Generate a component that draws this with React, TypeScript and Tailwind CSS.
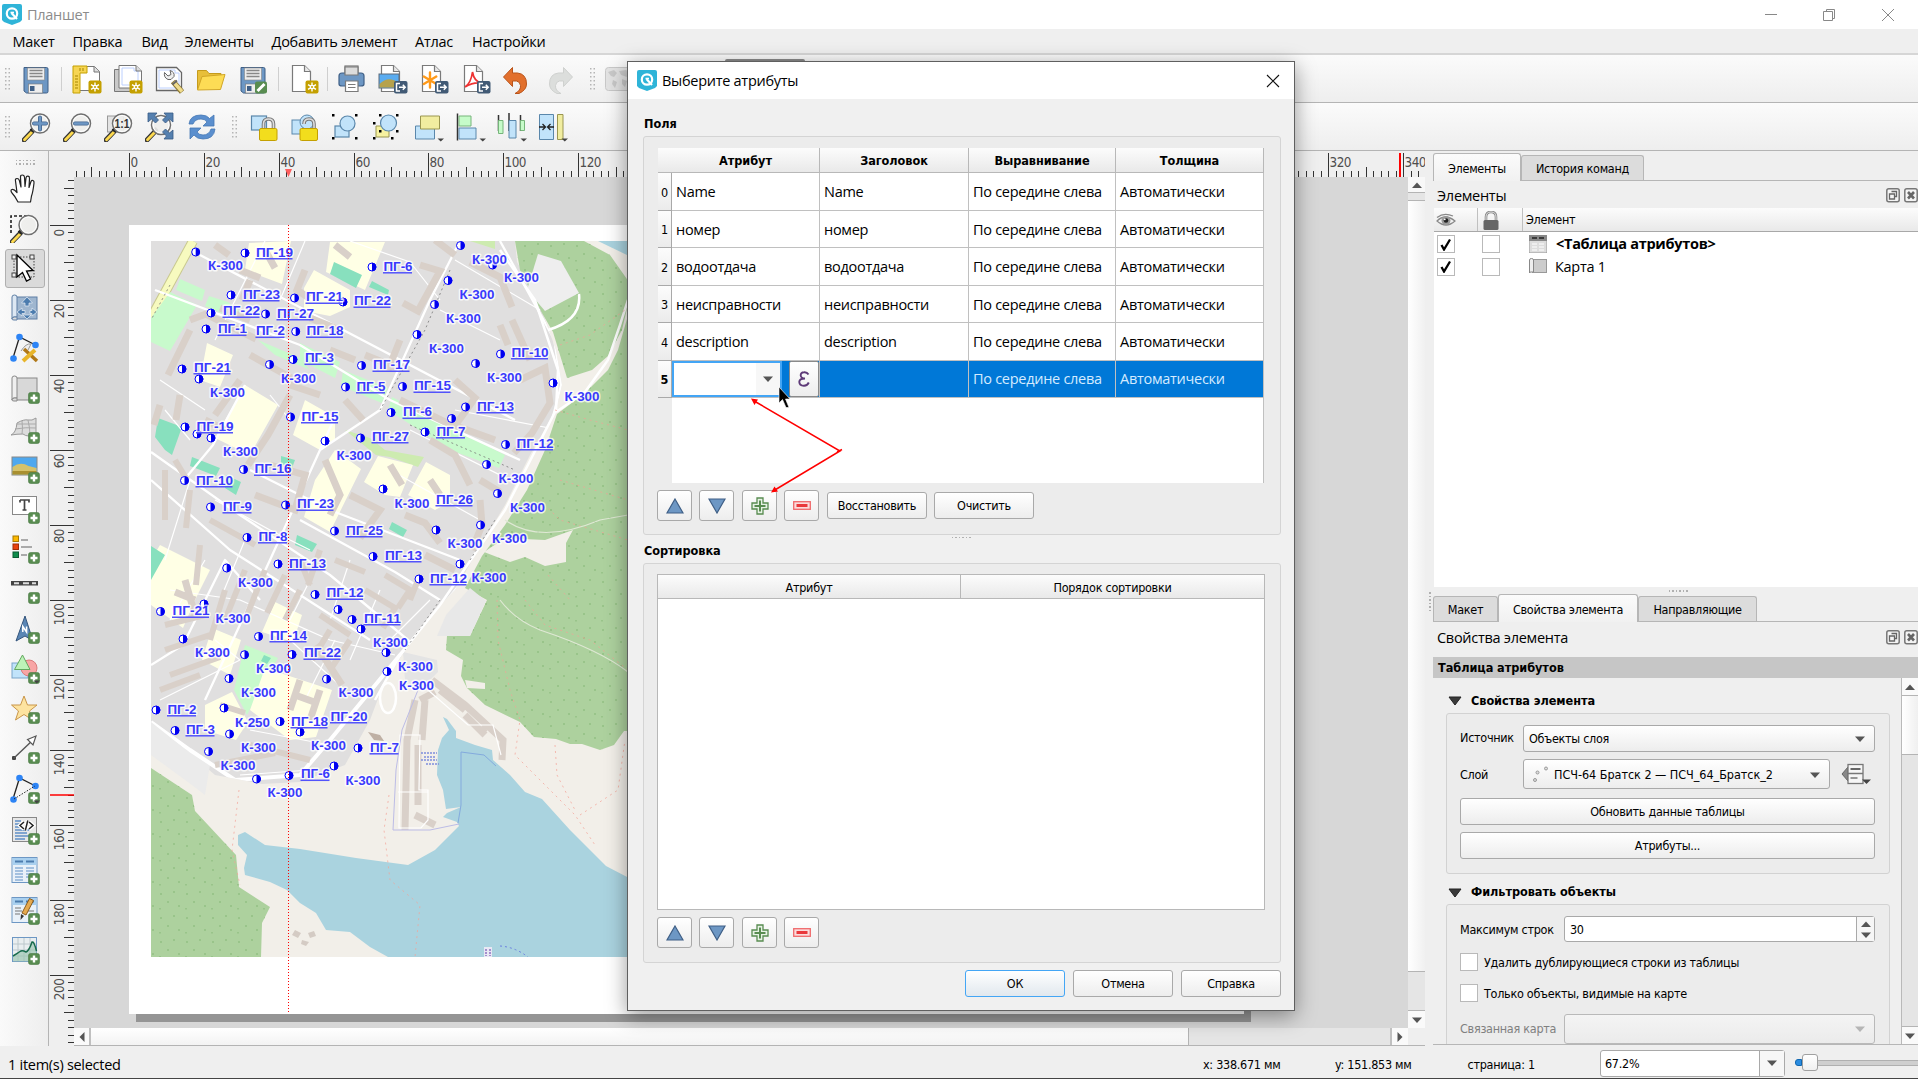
import React from 'react';

const SEG = "font-['Open_Sans',sans-serif] text-[14.5px] tracking-[-0.28px] leading-none whitespace-nowrap";
const TAH = "font-['DejaVu_Sans_Condensed','DejaVu_Sans',sans-serif] [font-stretch:condensed] text-[12.5px] tracking-[-0.28px] leading-none whitespace-nowrap";
const BOLD = "font-['DejaVu_Sans_Condensed','DejaVu_Sans',sans-serif] [font-stretch:condensed] font-bold text-[12.6px] tracking-[-0.05px] leading-none whitespace-nowrap";
const BTN = 'flex items-center justify-center rounded-[3px] border border-[#a9a9a9] bg-gradient-to-b from-white to-[#ededed] pt-[2px] text-black';

type Kids = { children?: React.ReactNode };

/* ---------- shared icon parts ---------- */

const Svg = ({ children, s = 30 }: Kids & { s?: number }) => (
  <svg width={s} height={s} viewBox="0 0 30 30" className="shrink-0">{children}</svg>
);

const Plus = () => (
  <g>
    <rect x="18.500" y="18.500" width="11" height="11" rx="2" fill="#588c50" stroke="#4a7a44" strokeWidth=".6" />
    <path d="M24 20.500v7M20.500 24h7" stroke="#fff" strokeWidth="2.400" />
  </g>
);
const Star = () => (
  <g>
    <rect x="16.500" y="16.500" width="13" height="13" rx="2" fill="#c4a000" />
    <path d="M23 18.500v9M19 20.700l8 4.600M27 20.700l-8 4.600" stroke="#fff" strokeWidth="1.400" />
    <circle cx="23" cy="23" r="2.300" fill="#fff" />
    <circle cx="23" cy="23" r="1" fill="#c4a000" />
  </g>
);
const Export = () => (
  <g>
    <rect x="16" y="17" width="13.500" height="12.500" rx="2" fill="#415a75" />
    <path d="M22 19.500h-3.500v7.500h3.500M21 23.300h6M24.800 20.800l2.400 2.500-2.400 2.500" fill="none" stroke="#fff" strokeWidth="1.500" />
  </g>
);
const Page = ({ fold = true }: { fold?: boolean }) => (
  <g fill="#fff" stroke="#7a7a7a" strokeWidth="1.200">
    <path d="M3.500 1.500h12l6 6v20h-18z" />
    {fold && <path d="M15.500 1.500v6h6" fill="#e8e8e8" />}
  </g>
);
const Floppy = () => (
  <g>
    <path d="M3 3.500h22.500q1.500 0 1.500 1.500v22.500q0 1.500-1.500 1.500h-20l-2.500-2z" fill="#6d97c4" stroke="#3f5f86" />
    <rect x="6.500" y="4" width="17" height="12" fill="#eee" stroke="#888" strokeWidth=".6" />
    <path d="M8.500 6.500h13M8.500 9.500h13M8.500 12.500h13" stroke="#888" strokeWidth="1.300" />
    <rect x="7.500" y="20" width="14" height="9" fill="#eee" stroke="#777" strokeWidth=".6" />
    <rect x="9" y="22" width="4.500" height="5" fill="#3f5f86" />
  </g>
);
const Lens = ({ children, x = 18, y = 11.500 }: Kids & { x?: number; y?: number }) => (
  <g>
    <path d="M10.500 19L2 28" stroke="#333" strokeWidth="4.800" strokeLinecap="round" />
    <path d="M9.500 20.500L2.500 27.800" stroke="#fcd94f" strokeWidth="2.800" strokeLinecap="round" />
    <path d="M9 19l3-2.500" stroke="#222" strokeWidth="4" />
    <circle cx={x} cy={y} r="9.500" fill="#eeeeec" fillOpacity=".92" stroke="#707070" strokeWidth="1.500" />
    <circle cx={x} cy={y} r="8" fill="none" stroke="#fff" strokeWidth="1" />
    {children}
  </g>
);
const DD = () => <path d="M23.500 26.500h6.500l-3.250 3z" fill="#444" />;
const NodeTri = () => (
  <g>
    <path d="M3 25L9.500 4 25.500 12" fill="none" stroke="#222" strokeWidth="1.300" />
    <g fill="#2d84f5">
      <circle cx="9.500" cy="4" r="3.300" /><circle cx="25.500" cy="12" r="3.300" /><circle cx="3.500" cy="25.500" r="3.300" />
    </g>
  </g>
);
const Scroll = ({ blue = false }: { blue?: boolean }) => (
  <g stroke={blue ? '#5e7fa5' : '#888'} strokeWidth="1">
    <rect x="5" y="4" width="22" height="22" fill={blue ? '#9fb6cf' : '#d8d8d8'} />
    <path d="M2 4q0-2 2.500-2T7 4v20H4q-2 0-2 2z" fill={blue ? '#dde8f3' : '#efefef'} />
    <path d="M2 26q0-2 2.500-2H7v3H4q-2 0-2-1z" fill="#ddd" />
  </g>
);
const TableBase = () => (
  <g>
    <rect x="2" y="2.500" width="25" height="25" fill="#e9f1f9" stroke="#6d97c4" />
    <rect x="2.500" y="3" width="24" height="7" fill="#a9d0ef" />
    <path d="M5 6.500h8M16 6.500h8" stroke="#4c7cae" strokeWidth="1.800" />
  </g>
);

/* ---------- top toolbars ---------- */

const R1a = [
  <Svg key="a"><path d="M2.500 2.500h20l5 5v19h-25z" fill="#fff" stroke="#777" /><path d="M22 2.500v5.500h5.500" fill="#ddd" stroke="#777" /><path d="M1 2h14v7H8v20H1z" fill="#f6d552" stroke="#c4a000" /><path d="M3 12h3M3 15h3M3 18h3M3 21h3M3 24h3M8 4v3M11 4v3" stroke="#a58500" /><Star /></Svg>,
  <Svg key="b"><path d="M1.500 5.500h22v22h-22z" fill="#c9c9c9" stroke="#777" /><path d="M6 1.500h17l5.500 5.500v17H6z" fill="#fff" stroke="#777" /><path d="M9 4h12v3h4v14H9z" fill="none" stroke="#bcd0ff" /><path d="M23 1.500V7h5.500" fill="#ddd" stroke="#777" /><Star /></Svg>,
  <Svg key="c"><path d="M1.500 3.500h20l5 5v18h-25z" fill="#fff" stroke="#666" strokeWidth="1.300" /><path d="M4 6h16v3h4v15H4z" fill="none" stroke="#bcd0ff" /><path d="M9.500 8.500q-1 5 3.500 7l3 0 3-3q1-4.500-4-6l1 4-3 1.500z" fill="#eee" stroke="#666" /><path d="M18 17.500l9 10.500" stroke="#8a7430" strokeWidth="5.500" /><path d="M18.500 18l8.500 9.500" stroke="#f0dc8c" strokeWidth="3.500" /><path d="M17.500 20.500l4.500-4" stroke="#666" strokeWidth="2" /></Svg>,
  <Svg key="d"><path d="M1.500 25.500v-19h9l2.500 3h12v4" fill="#e8bf3a" stroke="#c59b1c" /><path d="M1.500 26l4.500-13.500 23-2-4.500 15z" fill="#fddc55" stroke="#d1a626" /></Svg>,
  <Svg key="e"><Floppy /><rect x="17" y="17.500" width="12" height="12" rx="2" fill="#588c50" /><path d="M19.500 27l7-7" stroke="#fff" strokeWidth="3" /></Svg>,
];
const R1b = [
  <Svg key="a"><g fill="#fff" stroke="#7a7a7a" strokeWidth="1.200"><rect x="8" y="2" width="13" height="9" fill="#ddd" /><path d="M2 12q0-3 3-3h19q3 0 3 3v8q0 2-3 2H5q-3 0-3-2z" fill="#6d97c4" stroke="#3f5f86" /><path d="M8 3h13v8H8z" fill="#dcdcdc" /><path d="M8.500 17h12.500v10.500H8.500z" /><path d="M11 20.500h7.500M11 23.500h7.500" /></g></Svg>,
  <Svg key="b"><Page /><rect x="1" y="10" width="20" height="14" fill="#5aacf0" stroke="#5c6b7a" /><path d="M1.500 20q9-9 19-1v4.500h-19z" fill="#b6a24d" /><Export /></Svg>,
  <Svg key="c"><Page /><path d="M11 8.500v15M4.800 12.500l12.500 7.500M17.300 12.500L4.800 20" stroke="#ff9a1a" strokeWidth="2.400" strokeLinecap="round" /><Export /></Svg>,
  <Svg key="d"><Page /><path d="M4 23q6-4 7.500-15 1.500 9 8.500 11-8-1-16 4z" fill="none" stroke="#e33" strokeWidth="1.700" /><Export /></Svg>,
  <Svg key="e"><path d="M1.500 13L10.500 3.500v5.500h5q9 1 9 11 0 6-7.500 9.500h-4q6-3 5.500-8-.5-4-4-4.500h-4v5.500z" fill="#e2702d" stroke="#b9541b" strokeLinejoin="round" /></Svg>,
  <Svg key="f"><path d="M28.500 13L19.500 3.500v5.500h-5q-9 1-9 11 0 6 7.500 9.500h4q-6-3-5.500-8 .5-4 4-4.500h4v5.500z" fill="#dcdedc" stroke="#cfd1cf" strokeLinejoin="round" /></Svg>,
];
const Shapes = () => (
  <g stroke="#5a87ab" strokeWidth="1.200" fill="#c1e3fa"><rect x="3" y="12" width="14" height="11" /><circle cx="15.500" cy="9.500" r="7.500" /></g>
);
const Handles = ({ pts }: { pts: number[][] }) => (
  <g fill="#000">{pts.map(([x, y], i) => <rect key={i} x={x} y={y} width="2.500" height="2.500" />)}</g>
);
const R2a = [
  <Svg key="a"><Lens><path d="M18 5.500v12M12 11.500h12" stroke="#44668f" strokeWidth="4" strokeLinecap="round" /><path d="M18 5.500v12M12 11.500h12" stroke="#6d97c4" strokeWidth="2.400" strokeLinecap="round" /></Lens></Svg>,
  <Svg key="b"><Lens><path d="M12 11.500h12" stroke="#44668f" strokeWidth="4" strokeLinecap="round" /><path d="M12 11.500h12" stroke="#6d97c4" strokeWidth="2.400" strokeLinecap="round" /></Lens></Svg>,
  <Svg key="c"><rect x="3.500" y="4" width="16" height="16" fill="#e3e3e3" stroke="#999" /><Lens><text x="18" y="16" textAnchor="middle" textLength="15" lengthAdjust="spacingAndGlyphs" className="fill-[#333] font-['Liberation_Sans',sans-serif] text-[12px] font-bold">1:1</text></Lens></Svg>,
  <Svg key="d"><Lens x={16} y={13} /><g fill="#5580af" stroke="#395b85" strokeWidth=".8"><path d="M3 1h9L9.500 4l4 4-3 3-4-4L3 10z" /><path d="M28 1h-9l2.500 3-4 4 3 3 4-4L28 10z" /><path d="M28 27h-9l2.500-3-4-4 3-3 4 4 3.500-3z" /></g></Svg>,
  <Svg key="e"><g fill="#5b8fce" stroke="#4577b4" strokeWidth=".8"><path d="M2 12Q3 3 14 3q6 0 8.500 3.500L27 3v11H16l4-4q-2-3-6-3-6 0-8 5z" /><path d="M28 17q-1 10-12 10-6 0-9-4l-4 4V16h11l-4 4q2 3 6 3 6 0 8-6z" /></g></Svg>,
];
const Align = '#c6fbc9';
const R2b = [
  <Svg key="a"><rect x="1.500" y="4" width="15" height="14" fill="#c1e3fa" stroke="#5a87ab" strokeWidth="1.200" /><path d="M13.500 17v-5q0-5 5-5t5 5v5" fill="none" stroke="#777" strokeWidth="3.600" /><path d="M13.500 17v-5q0-5 5-5t5 5v5" fill="none" stroke="#ddd" strokeWidth="1.600" /><rect x="9.500" y="16.500" width="17.500" height="12" rx="1.500" fill="#f2dd1d" stroke="#c4a000" /></Svg>,
  <Svg key="b"><rect x="1" y="8" width="14" height="14" fill="#c1e3fa" stroke="#5a87ab" /><circle cx="16" cy="10" r="7" fill="#c1e3fa" stroke="#5a87ab" /><path d="M13 12q0-5 5-5t5 5v5" fill="none" stroke="#777" strokeWidth="3.600" /><path d="M13 12q0-5 5-5t5 5v5" fill="none" stroke="#ddd" strokeWidth="1.600" /><rect x="9" y="16.500" width="17.500" height="12" rx="1.500" fill="#f2dd1d" stroke="#c4a000" /></Svg>,
  <Svg key="c"><g transform="translate(0 2)"><Shapes /></g><Handles pts={[[0, 2], [23, 2], [0, 25], [23, 25]]} /></Svg>,
  <Svg key="d"><path d="M3 14h13v11H3z" fill="#f7f2a0" stroke="#9a9650" /><circle cx="15.500" cy="11" r="8" fill="#c1e3fa" stroke="#5a87ab" strokeWidth="1.200" /><Handles pts={[[6, 2], [23, 2], [0, 10], [6, 18], [23, 18], [0, 25], [18, 25]]} /></Svg>,
  <Svg key="e"><path d="M1.500 14h19v13h-19z" fill="#c1e3fa" stroke="#5a87ab" /><path d="M6.500 4h19v13h-19z" fill="#f1eda0" stroke="#9a9650" /><DD /></Svg>,
  <Svg key="f"><path d="M1.500 1.500v27" stroke="#333" strokeWidth="1.500" /><path d="M3 4h12v10H3z" fill={Align} stroke="#76b57a" /><path d="M3 16h17v11H3z" fill="#c1e3fa" stroke="#5a87ab" /><DD /></Svg>,
  <Svg key="g"><path d="M1.500 3v16M12 1v18M23.500 3v16" stroke="#333" strokeWidth="1.500" /><path d="M1.500 8.500h4.500v13h-4.500zM23.500 8.500h4v10h-4z" fill={Align} stroke="#76b57a" /><path d="M12 8.500h7v17.500h-7z" fill="#c1e3fa" stroke="#5a87ab" /><DD /></Svg>,
  <Svg key="h"><path d="M1.500 2.500h14v25h-14z" fill="#c1e3fa" stroke="#5a87ab" /><path d="M19.500 2.500h5.500v25h-5.500z" fill="#f1eda0" stroke="#9a9650" /><path d="M1 15h6M16 15h-6M4.500 12l3 3-3 3M12.500 12l-3 3 3 3" fill="none" stroke="#222" strokeWidth="1.300" /><DD /></Svg>,
];

const Grip = () => (
  <svg width="5" height="22" viewBox="0 0 5 22" className="shrink-0">
    {[0, 1, 2, 3, 4, 5].map(i => <g key={i} fill="#b5b5b5"><rect x="0" y={i * 4} width="1.500" height="1.500" /><rect x="3.500" y={i * 4} width="1.500" height="1.500" /></g>)}
  </svg>
);
const Sep = () => <div className="h-[24px] w-px bg-[#cfcfcf]" />;

const Logo = () => (
  <svg width="20" height="21" viewBox="0 0 20 21" className="shrink-0">
    <path d="M0 2Q0 0 2 0h16q2 0 2 2v14l-2 2-8 3-8-3-2-2z" fill="#2fb4d8" />
    <circle cx="10" cy="9.500" r="5.200" fill="none" stroke="#fff" strokeWidth="2.200" />
    <path d="M9.500 9l5.500 6" stroke="#fff" strokeWidth="2.200" />
    <path d="M8.500 8.500h3.500" stroke="#fff" strokeWidth="1.600" />
  </svg>
);

/* ---------- left toolbar ---------- */

const LEFT = [
  <g key="0"><path d="M8 29q-3-6-6-9-2-3 0-3.500 2-.5 5 3L5.500 8Q5 5.500 7 5.500T9.500 8l1.500 6-.5-10Q10.500 2 12.300 2T14.500 4l.5 9.500 1-8.500q.3-2 2-1.800t1.500 2.300l-.5 9 2-6q.7-1.500 2-1t1 2.500q-1 9-2.500 13l-1 6z" fill="#fff" stroke="#222" strokeWidth="1.200" strokeLinejoin="round" /></g>,
  <g key="1"><path d="M1 20V3h17" fill="none" stroke="#222" strokeWidth="1.600" strokeDasharray="3 2" /><g transform="translate(0 1)"><Lens x={18.500} y={11} /></g></g>,
  <g key="2"><path d="M4 4h20v20H4z" fill="none" stroke="#444" strokeDasharray="1.500 1.500" /><g fill="#eee" stroke="#444"><rect x="2" y="2" width="4" height="4" /><rect x="20" y="2" width="4" height="4" /><rect x="2" y="20" width="4" height="4" /></g><path d="M7 2l16 15.500-6.500.5 4 8-4 2-4-8.500L7 24z" fill="#fff" stroke="#000" strokeWidth="1.300" /></g>,
  <g key="3"><Scroll blue /><path d="M17 4l5.500 6H19v3h-4v-3h-3.500zM17 26l-4-4h8zM7 19l5-4v2.500h3v3h-3V23zM27 19l-5-4v2.500h-2v3h2V23z" fill="#4c7cae" stroke="#e8eff6" strokeWidth=".7" /></g>,
  <g key="4"><NodeTri /><path d="M11 18q5-8 10-7l-3 6" fill="#eee" stroke="#999" /><path d="M14 16l13 12" stroke="#b07818" strokeWidth="3.500" /><path d="M13 28l12-11" stroke="#e8b52a" strokeWidth="4" /></g>,
  <g key="5"><Scroll /><Plus /></g>,
  <g key="6"><path d="M1 21q5-2 6-12 7-4 11-3 4 1 8-2v16q-8 4-13 0-6 0-12 1z" fill="#dcdcdc" stroke="#999" /><path d="M5 15q11-2 21-1M12 7q1 8 0 13M18 6q2 8 2 16M7 10h19" fill="none" stroke="#aaa" /><Plus /></g>,
  <g key="7"><rect x="2" y="3" width="25" height="18" fill="#4fa8ee" stroke="#888" /><path d="M2.500 13q8-6 16-1l8 2v6.500h-24z" fill="#d6c26a" /><path d="M2.500 17h24v3.500h-24z" fill="#a98f30" /><Plus /></g>,
  <g key="8"><rect x="2.500" y="2.500" width="24" height="18" fill="#fff" stroke="#888" /><path d="M10 6h9v2.500M10 6v2.500M14.500 6v10M12.500 16h4" fill="none" stroke="#444" strokeWidth="1.700" /><Plus /></g>,
  <g key="9"><rect x="3" y="2" width="5.500" height="5.500" fill="#fcb800" stroke="#a87a00" /><rect x="3" y="10" width="5.500" height="5.500" fill="#e8420c" stroke="#a02c06" /><rect x="3" y="18" width="5.500" height="5.500" fill="#0f8d4c" stroke="#0a5c32" /><path d="M11 6h7M11 13h11M11 21h6" stroke="#aaa" strokeWidth="2" /><Plus /></g>,
  <g key="10"><rect x="1" y="7" width="27" height="4.500" fill="#444" /><path d="M4 9.200h5M13 9.200h6M22 9.200h4" stroke="#ddd" strokeWidth="2" /><Plus /></g>,
  <g key="11"><path d="M15 2L6 27l9-5 8 5z" fill="#5a86b5" stroke="#34557c" /><path d="M12.800 18v-5.500l3.800 5.500v-5.500" fill="none" stroke="#fff" strokeWidth="1.500" /><Plus /></g>,
  <g key="12"><rect x="2" y="9" width="16" height="15" fill="#c1e3fa" stroke="#7aa5c9" /><circle cx="19" cy="14" r="8" fill="#f8a5a5" stroke="#d87c7c" /><path d="M12.500 1L20 15.500H4.500z" fill="#bdf2b8" stroke="#62a85e" /><Plus /><DD /></g>,
  <g key="13"><path d="M14 2l3.500 9H27l-7.500 6 3 9-8.500-5.500L5.500 26l3-9L1.500 11h9z" fill="#fde3a0" stroke="#c9964a" /><Plus /></g>,
  <g key="14"><rect x="2" y="22" width="4" height="4" rx="1" fill="#444" /><path d="M4 24L24 5" stroke="#555" strokeWidth="1.400" /><path d="M17.500 5.500L26 2l-3 9z" fill="#fff" stroke="#555" strokeWidth="1.200" /><Plus /></g>,
  <g key="15"><NodeTri /><path d="M4 25L25 12" stroke="#222" strokeDasharray="1.500 1.500" /><Plus /><DD /></g>,
  <g key="16"><rect x="2.500" y="2.500" width="24" height="24" fill="#e8e8e8" stroke="#888" /><path d="M5 6h6M5 9h5M5 12h6M5 15h14M5 18h12M5 21h14M5 24h10" stroke="#5f8fc6" strokeWidth="1.700" /><path d="M14 7l-4 3.500 4 3.500M19 7l4 3.500-4 3.500M17.800 5.500l-2.500 10" fill="none" stroke="#fff" strokeWidth="4" /><path d="M14 7l-4 3.500 4 3.500M19 7l4 3.500-4 3.500M17.800 5.500l-2.500 10" fill="none" stroke="#222" strokeWidth="1.500" /><Plus /></g>,
  <g key="17"><TableBase /><path d="M5 13h8M5 16h8M5 19h8M5 22h8M5 25h8M16 13h8M16 16h8M16 19h8M16 22h3" stroke="#5f8fc6" strokeWidth="1.200" /><Plus /></g>,
  <g key="18"><TableBase /><path d="M5 13h6M5 16h7M5 19h5M18 16h6" stroke="#777" strokeWidth="1.200" /><path d="M11 19l3 2-3.500 4z" fill="#333" /><path d="M12 18L19.500 3.500l4 2-7.500 14.500z" fill="#e5a94e" stroke="#8a5c1e" /><Plus /></g>,
  <g key="19"><rect x="2.500" y="2.500" width="24" height="24" fill="#e9eef0" stroke="#6d97c4" /><path d="M8 3v23M14 3v23M20 3v23M3 9h23M3 15h23M3 21h23" stroke="#bcc8cc" /><path d="M3 21q5-3 7-4.500t6 .5q3-1 6-10 2-1 4.500 9v10.500H3z" fill="#9ec7b4" fillOpacity=".7" /><path d="M3 21q5-3 7-4.500t6 .5q3-1 6-10 2-1 4.500 9" fill="none" stroke="#176b4c" strokeWidth="1.500" /><Plus /></g>,
];

/* ---------- rulers ---------- */

const MM = 3.7487;

const HRuler = () => {
  const ticks: React.ReactNode[] = [];
  for (let mm = -14; mm <= 344; mm += 2) {
    const x = Math.round(128.6 - 49 + mm * MM) + 0.5;
    const y = mm % 20 === 0 ? 2 : mm % 10 === 0 ? 16 : 20;
    ticks.push(<path key={mm} d={`M${x} ${y}V26`} stroke="#333" strokeWidth="1" />);
    if (mm % 20 === 0 && (mm <= 120 || mm >= 320)) ticks.push(<text key={'t' + mm} x={x + 1} y="16" className="fill-[#4d4d4d] font-['DejaVu_Sans_Condensed','DejaVu_Sans',sans-serif] text-[13.400px] tracking-[-0.5px]">{mm}</text>);
  }
  return (
    <svg width="1376" height="26" viewBox="0 0 1376 26" className="block shrink-0">
      {ticks}
      <path d="M236 18h7l-3.500 8z" fill="#ff5f5f" />
      <path d="M1351 2V26" stroke="#f00" strokeWidth="2" />
    </svg>
  );
};

const VRuler = () => {
  const ticks: React.ReactNode[] = [];
  for (let mm = -12; mm <= 218; mm += 2) {
    const y = Math.round(225 - 177 + mm * MM) + 0.5;
    const x = mm % 20 === 0 ? 1 : mm % 10 === 0 ? 15 : 19;
    ticks.push(<path key={mm} d={`M${x} ${y}H25`} stroke="#333" strokeWidth="1" />);
    if (mm % 20 === 0) {
      const w = String(mm).length * 6.9;
      ticks.push(<text key={'t' + mm} transform={`translate(15 ${y + 4 + w}) rotate(-90)`} className="fill-[#4d4d4d] font-['DejaVu_Sans_Condensed','DejaVu_Sans',sans-serif] text-[13.400px] tracking-[-0.5px]">{mm}</text>);
    }
  }
  return (
    <svg width="25" height="868" viewBox="0 0 25 868" className="block shrink-0">
      {ticks}
      <path d="M1 618H25" stroke="#f00" strokeWidth="1.500" />
    </svg>
  );
};

/* ---------- map ---------- */

const DOTS: [number, number][] = [
  [195.7, 252], [245, 253], [231, 295], [294.500, 298], [211, 313], [265.500, 314], [206, 329], [295.700, 331.500], [182, 369], [199, 379], [293, 359.500], [269.500, 364.500], [290.500, 417], [185, 427], [197, 434], [211, 438], [243.500, 469.500], [184.500, 480.500], [210.500, 507], [285.500, 505], [247, 537.500], [278, 564], [226.700, 568],
  [315, 594.500], [204, 604], [160.500, 611.500], [183, 639], [258.500, 636.500], [244.500, 654.700], [292, 654.500], [229, 678.500], [224, 708], [156, 710], [175, 730.500], [280, 721.500], [229.500, 734], [300, 732], [208.500, 751.500], [289, 775.500], [256.500, 779],
  [460.500, 245.500], [492.500, 265], [448, 280.500], [343, 302], [434.500, 304.500], [417, 334.500], [372, 267], [361.500, 365.500], [500.500, 354], [475.500, 363.500], [345.500, 387], [402.500, 386.500], [553, 383], [465.500, 407], [451.500, 418.500], [391, 412.500], [425, 432], [505.500, 444.500], [325, 441], [360.500, 438], [486.500, 464.500], [383, 489], [497.500, 493.500], [480.500, 525], [436, 530], [334.500, 531], [373, 556.500], [460, 564], [419, 579],
  [338, 609.500], [352, 619.500], [361, 629], [386, 652.500], [387, 671.500], [326.500, 679], [358, 748], [334, 766],
];
const LABELS: [string, number, number][] = [
  ['ПГ-19', 256, 257], ['ПГ-23', 243, 299], ['ПГ-22', 223, 315.500], ['ПГ-27', 277, 318], ['ПГ-1', 218, 333.500], ['ПГ-2', 256, 335.500], ['ПГ-21', 194, 372], ['ПГ-19', 196.500, 431], ['ПГ-16', 254.500, 473.500], ['ПГ-10', 196, 485], ['ПГ-9', 223, 511], ['ПГ-8', 258.500, 541],
  ['ПГ-21', 306, 301.500], ['ПГ-22', 354, 305.500], ['ПГ-18', 306.500, 335.500], ['ПГ-3', 305, 362.500], ['ПГ-17', 373, 369.500], ['ПГ-5', 356.500, 391], ['ПГ-15', 414, 390.500], ['ПГ-6', 403, 416.500], ['ПГ-13', 477, 411], ['ПГ-7', 436.500, 436], ['ПГ-12', 516.500, 448], ['ПГ-10', 511.500, 357], ['ПГ-15', 301.500, 421], ['ПГ-27', 372, 441], ['ПГ-26', 436, 504], ['ПГ-23', 297, 508.500], ['ПГ-25', 346, 535], ['ПГ-13', 385, 560], ['ПГ-12', 430, 583], ['ПГ-12', 326.500, 597.500], ['ПГ-13', 289, 568], ['ПГ-6', 383.500, 271], ['ПГ-11', 364, 623],
  ['ПГ-21', 172.500, 615.500], ['ПГ-14', 270, 640], ['ПГ-2', 167.500, 714], ['ПГ-3', 186, 734], ['ПГ-22', 304, 657.500], ['ПГ-18', 291, 726], ['ПГ-20', 330.500, 721], ['ПГ-7', 370, 752], ['ПГ-6', 301, 778.500],
  ['К-250', 235, 727],
];
const K300: [number, number][] = [
  [208, 270.500], [210, 397.500], [223, 456], [281, 383], [472, 264], [504, 282], [459.500, 299.500], [446, 323.500], [429, 353], [487, 382], [564.500, 401.500], [336.500, 460], [394.500, 508], [498.500, 483.500], [510, 512.500], [492, 543.500], [447.500, 548.500], [471.500, 582.500],
  [238, 587], [215.500, 623.500], [195, 657], [256, 673], [241, 697], [241, 752.500], [220.500, 770], [267.500, 797.500], [373, 647.500], [398, 671], [399, 690.500], [338.500, 697], [311, 750.500], [345.500, 785],
];

const MapLabel = ({ t, x, y }: { t: string; x: number; y: number }) => {
  const w = t.startsWith('К') ? 35 : t.length === 5 ? 37 : 29;
  return (
    <g>
      <text x={x} y={y - 0.5} textLength={w} lengthAdjust="spacingAndGlyphs" paintOrder="stroke" stroke="#fff" strokeOpacity=".75" strokeWidth="3" strokeLinejoin="round" fill="#3a3afc" className="font-['Liberation_Sans',sans-serif] text-[13.400px] font-bold">{t}</text>
      {t.startsWith('П') && <path d={`M${x - 0.5} ${y + 1.8}h${w}`} stroke="#5353fb" strokeWidth="1.500" />}
    </g>
  );
};

const CITY = '151,241 515,241 517,262 538,300 556,350 562,385 556,410 530,455 505,505 478,550 455,590 435,610 402,655 385,680 370,720 345,765 300,782 262,784 215,775 180,745 151,722';

const TheMap = () => (
  <svg width="478" height="716" viewBox="151 241 478 716" className="block">
    <defs>
      <pattern id="trees" width="26" height="24" patternUnits="userSpaceOnUse">
        <path d="M4 5h2v2h-2zM17 3h2v2h-2zM11 13h2v2h-2zM22 17h2v2h-2zM3 20h2v1.500h-2z" fill="#99c48a" />
      </pattern>
      <clipPath id="city"><polygon points={CITY} /></clipPath>
    </defs>
    <rect x="151" y="241" width="478" height="716" fill="#f2efe9" />
    <polygon points={CITY} fill="#e0dfdf" />
    <polygon points="151,722 210,765 205,795 192,785 151,755" fill="#ebebeb" />
    <polygon points="403,652 437,660 438,672 420,690 405,680" fill="#e4e4e4" />
    {[0, 1].map(k => (
      <g key={k} fill={k ? 'url(#trees)' : '#add19e'}>
        <path d="M515 241H584L610 255 629 282V300L622 330 608 356 592 370 567 378 553 332 542 313 520 270Z" />
        <path d="M629 312L618 350 608 370 585 393 557 414 545 450 527 490 505 525 482 556 465 588 487 600 470 636H447L446 650 463 660 461 676 467 688 485 705 520 722 534 737 556 739 570 744H582L600 750 614 745 624 731H629Z" />
        <path d="M151 768L192 795 195 811 222 840 236 855 239 887 270 907 262 923 261 957H151Z" />
      </g>
    ))}
    <path d="M484 552L505 538 545 540 573 530 566 543 566 562 545 566 525 557 510 562Z" fill="#f2efe9" />
    <path d="M465 680l20 3v6l-18-1z" fill="#f2efe9" />
    <polygon points="538,254 561,261 579,293 545,311 527,290" fill="#eee" />
    <path d="M470 588L486 601 470 636H437L446 615Z" fill="#e8e8e8" />
    <path d="M598 241H629V256Z" fill="#aad3df" />
    <path d="M238 835L245 832 265 845 300 849 356 858 408 865 435 850 459 826 457 822 443 817 447 813 461 807 446 809 443 790 437 775 438 750 442 738 449 730 443 717 447 719 456 731 456 738 475 745 492 750 493 760 510 775 525 792 542 799 570 830 606 866 629 878V957H388L370 947 350 932 326 930 316 913 300 903 287 890 270 882 245 875 244 868 247 855 238 845Z" fill="#aad3df" />
    <path d="M461 752V805L458 823M461 752L484 755 496 766" fill="none" stroke="#83aadd" strokeWidth="1" />
    {/* yellow trunk road */}
    <path d="M151 318L193 241" stroke="#c9c98f" strokeWidth="10" />
    <path d="M151 318L193 241" stroke="#f7fabf" strokeWidth="8" />
    <g fill="#c8facc">
      <path d="M180 279L205 290 202 301 176 290ZM209 296L228 302 240 312 228 316 205 306ZM170 292L197 305 170 351 151 342V318ZM258 340L300 358 310 370 275 355Z" />
      <path d="M300 343L340 362 335 378 300 360ZM343 370L388 388 382 403 341 386ZM392 397L505 455 499 468 450 450 388 410ZM245 645L278 658 265 680 247 715 234 690Z" />
    </g>
    <path d="M345 430L370 438 385 450 424 457 418 467 390 457 376 455ZM470 241h25v8z" fill="#cdebb0" />
    <g fill="#ffffe5">
      <path d="M249 243L291 241 282 284 245 270ZM330 242H385L365 290 326 272ZM314 270L350 290 350 307 330 316 304 311 304 288ZM207 343L233 355 220 387 200 380ZM245 385L278 405 250 455 215 438ZM305 400L335 417V440L320 450 293 435Z" />
      <path d="M335 450L361 469 330 532 304 517 315 480ZM378 456L413 465 400 497 385 495 364 482ZM426 462L450 475V502L435 510 408 495ZM160 545L210 570 195 600 183 628 151 605V560ZM275 602L302 615 293 642 262 632ZM212 628L241 640 230 675 202 660ZM265 668L332 690 316 737 290 740 250 710ZM205 705L232 692 248 722 236 740 205 730Z" />
    </g>
    <g fill="#88e0be">
      <path d="M334 262L362 275 356 288 330 274ZM372 281L389 290 388 295 369 287ZM158 418L182 427 172 455 165 450 155 437ZM192 457L220 468 216 476 190 466ZM226 475L241 482 236 495 225 488ZM297 535L317 544 312 552 295 545ZM151 546L165 555 151 580ZM392 522L407 530 403 537 389 529ZM264 655l7 3-4 6-6-3zM281 456l14 4-3 8-11-4z" />
    </g>
    {/* streets */}
    <g clipPath="url(#city)" fill="none" stroke="#fff" strokeLinejoin="round">
      <path d="M151 452L240 515 330 575 420 650 395 680M460 241L430 300 380 410 320 450M155 290L300 345 390 400 520 460M200 255L515 420M151 480L230 550 370 640M300 520L395 572 440 600M245 385L213 445 184 480M335 417L270 560 205 700M460 560L330 510 250 470M500 241L560 350M151 665L183 645 225 560 260 600" strokeWidth="2.300" />
      <path d="M170 590L240 600 330 640 395 655M265 241L215 340M305 241L280 300M350 241L410 262 440 300M440 310L500 340M455 260L540 310M410 430L530 490M455 410L560 430M390 470L480 520M320 560L290 620M350 560L330 620M430 600L390 640M380 590L350 660M205 560L170 620M160 700L240 660M240 660L215 640M290 640L345 690M335 640L305 700M190 480L165 560M245 540L220 600M215 500L270 530 310 550M160 380L205 410M165 410L190 440M270 395L290 420M250 730L330 745M240 775L310 770" strokeWidth="1.200" />
      <path d="M540 241L562 385 553 420 505 530 440 610 400 655 330 740 300 775 235 780 190 750 151 722" strokeWidth="4" />
    </g>
    <path d="M500 250L535 300 558 370 556 410 505 510 440 605 400 655 375 700M556 412L585 392 608 360 620 325 628 300M579 294Q582 320 548 330" fill="none" stroke="#fff" strokeWidth="2.500" />
    <path d="M450 270L425 330 380 410M470 560L495 520M170 285L151 320M440 600L405 650M410 425L515 470" fill="none" stroke="#777" strokeWidth=".8" strokeDasharray="2 3" />
    <ellipse cx="388" cy="698" rx="8" ry="15" fill="none" stroke="#fff" strokeWidth="2.500" />
    {/* buildings */}
    <g fill="none" stroke="#d9d0c9" strokeWidth="7">
      <path d="M215 245l14 10M240 270l20 8M190 320l16-6 50 25M190 330l-22 45M250 355l45 25M305 270l-8 20 12 8M250 280l-8 20M180 395l-4 25M240 380l-25 35M290 395l-22 40-20 30M270 465l35 10-10 35-40-15M205 420l20 10M160 405l-6 20" />
      <path d="M420 265l20 6-22 40-15-8M470 262l30 15 12 30M500 325l8 20M512 320l18 40M435 240l20 15M365 355l30 12M400 340l-12 30M330 350l25 10M455 380l20 18-18 25M520 380l25-12 5 35-18 30-18 20M400 400l45 22 50 18M345 400l18 20M430 440l25 15 15 30M480 480l20 12M480 500l2 25-10 25M350 495l30 15-20 28M405 515l20 8 15 20M425 555l30 15M320 395l-30-10M340 330l-30-12" />
      <path d="M165 470v50M175 460l12 20M190 490l-4 38M200 545l-4 40M225 590l-15 50M245 570l-20 50M265 570l-18 45M285 575l-18 38M165 625l40-10M165 650l45-15M170 675l50-18M160 690l40-15M210 520l45 25M300 590l-15 30M320 550l-12 35M335 560l30 12M350 640l-20 30M330 630l-18 30M365 590l30 18-12 20M300 560l10 25M385 575l25 15-12 18M320 615l30 20M410 600l10-25M215 765l60-12M250 745l60 15M220 705l25 8" strokeWidth="6" />
      <path d="M316 645l26 40M185 580l10 35M195 600l-20-8M300 680l-10 30M320 690l-10 30M295 695l22 8M250 320l-30-12M325 460l15 35-10 20M390 465l12 20M430 480l10 15M265 250l10 18M335 245l15 12" strokeWidth="7" />
      <path d="M415 700L407 740 405 830M418 745v60M425 700l-3 40M415 815l20 10M432 680L465 705 503 740 502 760M465 715l20 20M440 690l25 20M420 700l15-8M480 728l5 5" strokeWidth="7" />
    </g>
    <g fill="none" stroke="#fff" strokeWidth="1.200">
      <path d="M400 735h20l-1 55h9v30l-7 8h-22zM428 690l40 35h25l8 30M398 792h30" />
    </g>
    <path d="M418 690L402 730 396 770 393 830H430L459 824" fill="none" stroke="#bcbce6" />
    {/* tracks */}
    <g fill="none" stroke="#f4a196" strokeWidth="1" strokeDasharray="2 4">
      <path d="M389 795L384 830 390 880 420 905 415 957M239 790L232 850 240 885M525 600L545 625 590 640 628 670M497 600L498 640 510 690 520 720 515 755 575 815 595 845M540 500L560 520 628 540M548 575L570 600M580 815L618 790 625 740M555 745L557 775 575 810M560 345L590 335 625 310M555 410L590 420 628 430M560 480L628 500" strokeOpacity=".7" />
    </g>
    <path d="M500 600Q515 620 540 630 600 650 628 672M505 520Q540 545 600 520L628 515" fill="none" stroke="#dfe8d4" strokeWidth="1.200" />
    <path d="M421 753h16M424 757h12M421 760h16M426 764h13" stroke="#7f8fdc" strokeWidth="1.500" strokeDasharray="2 1" />
    <path d="M484 947h8v10h-8z" fill="#e8e8f4" /><path d="M486 949v7M490 949v7" stroke="#8e6fc0" strokeWidth="1.500" strokeDasharray="2 1" />
    <path d="M500 946q15 1 28 11" fill="none" stroke="#6a7fe0" strokeDasharray="2 3" />
    <g fill="#d4cbc4"><path d="M295 930l6 3-3 5-6-3zM308 933l6-2 2 5-6 2zM302 940l7 2-3 4-5-2z" /><path d="M368 732l12 3 4 6-10-1z" fill="#bfb0a4" /></g>
    {DOTS.map(([x, y], i) => (
      <g key={i}>
        <circle cx={x} cy={y} r="4" fill="#fff" stroke="#00f" strokeWidth="1" />
        <path d={`M${x} ${y - 4.3}a4.300 4.300 0 0 1 0 8.600z`} fill="#0000f0" />
      </g>
    ))}
    {LABELS.map(([t, x, y], i) => <MapLabel key={i} t={t} x={x} y={y} />)}
    {K300.map(([x, y], i) => <MapLabel key={i} t="К-300" x={x} y={y} />)}
  </svg>
);

/* ---------- small controls ---------- */

const Tri = ({ dir, c = '#555' }: { dir: 'u' | 'd' | 'l' | 'r'; c?: string }) => (
  <svg width="10" height="10" viewBox="0 0 10 10" className="shrink-0">
    <path d={dir === 'u' ? 'M0 8h10L5 2.500z' : dir === 'd' ? 'M0 2.500h10L5 8z' : dir === 'l' ? 'M7.500 0v10L2.500 5z' : 'M2.500 0v10L7.500 5z'} fill={c} />
  </svg>
);

const Check = ({ on = false, className = '' }: { on?: boolean; className?: string }) => (
  <div className={'flex size-[18px] shrink-0 items-center justify-center border border-[#b9b9b9] bg-white ' + className}>
    {on && <svg width="12" height="13" viewBox="0 0 12 13"><path d="M1.500 7L4 11.500 10 1.500" fill="none" stroke="#000" strokeWidth="2.300" /></svg>}
  </div>
);

const DockBtns = () => (
  <div className="flex gap-[4px] pb-[2px]">
    {[0, 1].map(i => (
      <svg key={i} width="14" height="15" viewBox="0 0 14 15">
        <rect x=".8" y=".8" width="12.400" height="13" rx="2" fill="#f4f4f4" stroke="#777" strokeWidth="1.500" />
        {i ? <path d="M4 4l6 6.500M10 4l-6 6.500" stroke="#666" strokeWidth="2.600" /> : <path d="M5.500 3.500h5v5h-2M3.500 6h5v5h-5z" fill="none" stroke="#666" strokeWidth="1.300" />}
      </svg>
    ))}
  </div>
);

const Splitter = ({ v = false }: { v?: boolean }) => (
  <div className={v ? 'flex flex-col gap-[2px]' : 'flex gap-[2px]'}>
    {[0, 1, 2, 3, 4, 5].map(i => <div key={i} className="size-[1.500px] bg-[#b0b0b0]" />)}
  </div>
);

const Tab = ({ children, active = false, w }: Kids & { active?: boolean; w: string }) => (
  <div className={`${TAH} ${w} flex shrink-0 items-center justify-center rounded-t-[3px] border border-b-0 border-[#b6b6b6] text-black ${active ? 'mb-[-1px] h-[28px] bg-gradient-to-b from-[#fbfbfb] to-[#f1f1f1] pt-[3px]' : 'h-[25px] bg-[#dcdcdc] pt-[3px]'}`}>{children}</div>
);

const VScroll = ({ cls, children }: Kids & { cls: string }) => (
  <div className={'flex w-[17px] shrink-0 flex-col ' + cls}>{children}</div>
);

/* ---------- right panel ---------- */

const RightPanel = () => (
  <div className="flex w-[485px] shrink-0 flex-col bg-[#efefef]">
    <div className="flex h-[30px] items-end border-b border-[#b6b6b6]">
      <Tab active w="w-[88px]">Элементы</Tab>
      <Tab w="w-[123px]">История команд</Tab>
    </div>
    <div className="flex h-[27px] items-center justify-between pt-[3px] pl-[4px]">
      <span className={SEG}>Элементы</span><DockBtns />
    </div>
    <div className="ml-px flex h-[24px] shrink-0 border-b border-[#a8a8a8] bg-gradient-to-b from-[#fcfcfc] to-[#e9e9e9]">
      <div className="flex w-[44px] items-center border-r border-[#c0c0c0] pt-px pl-[2px]">
        <svg width="20" height="14" viewBox="0 0 20 14"><path d="M1 4.500Q8-1 17 3M1 8q8-8 18 0-9 8-18 0z" fill="none" stroke="#888" strokeWidth="1.200" /><circle cx="10" cy="7.500" r="4.500" fill="#999" /><circle cx="10" cy="7.500" r="2.300" fill="#222" /><circle cx="8.800" cy="6.300" r=".9" fill="#fff" /></svg>
      </div>
      <div className="flex w-[45px] items-center border-r border-[#c0c0c0] pt-[2px] pl-[5px]">
        <svg width="16" height="19" viewBox="0 0 16 19"><path d="M3 10V6q0-5 5-5t5 5v4" fill="none" stroke="#888" strokeWidth="2.600" /><path d="M3 10V6q0-5 5-5t5 5v4" fill="none" stroke="#ddd" strokeWidth="1" /><rect x=".5" y="9" width="15" height="10" rx="1.500" fill="#666" /></svg>
      </div>
      <span className={`${TAH} pt-[5.500px] pl-[3px]`}>Элемент</span>
    </div>
    <div className="ml-px flex h-[355px] shrink-0 flex-col bg-white pt-px">
      <div className="flex h-[22.500px] items-center pl-[3px]">
        <Check on /><Check className="ml-[27px]" />
        <svg width="18" height="18" viewBox="0 0 18 18" className="ml-[29px]"><rect width="18" height="18" fill="#ddd" stroke="#999" /><rect width="18" height="6" fill="#888" /><path d="M3 3h5M10 3h5" stroke="#222" strokeWidth="1.500" /><path d="M3 9h5M10 9h5M3 12h5M10 12h5M3 15h5M10 15h5" stroke="#fff" strokeWidth="1.200" /></svg>
        <span className="ml-[9px] font-['Open_Sans',sans-serif] text-[14.500px] leading-none font-bold tracking-[-0.28px] whitespace-nowrap">&lt;Таблица атрибутов&gt;</span>
      </div>
      <div className="flex h-[22.500px] items-center pl-[3px]">
        <Check on /><Check className="ml-[27px]" />
        <svg width="18" height="17" viewBox="0 0 18 17" className="ml-[29px]"><rect x="3.500" y="1.500" width="14" height="13" fill="#ccc" stroke="#999" /><path d="M.5 2q0-1.500 2-1.500t2 1.500v12H2q-1.500 0-1.500 1z" fill="#eee" stroke="#888" /></svg>
        <span className={`${SEG} ml-[8px]`}>Карта 1</span>
      </div>
    </div>
    <div className="flex h-[8px] shrink-0 items-center justify-center pl-[5px]"><Splitter /></div>
    <div className="flex h-[27px] shrink-0 items-end border-b border-[#b6b6b6]">
      <Tab w="w-[65px]">Макет</Tab>
      <Tab active w="w-[140px]">Свойства элемента</Tab>
      <Tab w="w-[119px]">Направляющие</Tab>
    </div>
    <div className="flex h-[35px] shrink-0 items-center justify-between pb-[2px] pl-[4px]">
      <span className={SEG}>Свойства элемента</span><DockBtns />
    </div>
    <div className={`${BOLD} flex h-[21px] shrink-0 items-center bg-[#c6c6c6] pt-px pl-[5px]`}>Таблица атрибутов</div>
    <div className="flex h-[367px] shrink-0 overflow-hidden border-b border-[#b6b6b6]">
      <div className="flex w-[468px] shrink-0 flex-col pl-[13px]">
        <div className="flex h-[35px] shrink-0 items-center gap-[9px] pt-[11px] pl-[2px]">
          <svg width="14" height="10" viewBox="0 0 14 10"><path d="M1 1h12L7 9z" fill="#3a3a3a" stroke="#222" /></svg>
          <span className={BOLD}>Свойства элемента</span>
        </div>
        <div className="flex h-[161px] w-[444px] shrink-0 flex-col rounded-[3px] border border-[#d2d2d2] bg-[#ececec] pt-[10px] pl-[13px]">
          <div className={`${TAH} flex h-[28px] items-center`}>
            <span className="w-[63px] pt-px">Источник</span>
            <div className={`${BTN} h-[27px] w-[352px] justify-between! pr-[9px] pl-[5px]`}>Объекты слоя<Tri dir="d" /></div>
          </div>
          <div className={`${TAH} mt-[7px] flex h-[30px] items-center`}>
            <span className="w-[63px] pt-[2px]">Слой</span>
            <div className={`${BTN} h-[30px] w-[307px] justify-between! pr-[9px] pl-[8px]`}>
              <span className="flex items-center gap-[6px] tracking-[-0.03px]">
                <svg width="16" height="20" viewBox="0 0 16 20" fill="#ddd" stroke="#999"><circle cx="3" cy="15" r="1.500" /><circle cx="5.500" cy="7.500" r="1.500" /><circle cx="14" cy="3.500" r="1.500" /></svg>
                ПСЧ-64 Братск 2 — ПСЧ_64_Братск_2
              </span>
              <Tri dir="d" />
            </div>
            <svg width="30" height="22" viewBox="0 0 30 22" className="ml-[11px]"><path d="M1 11L7 4v14z" fill="#888" stroke="#666" /><rect x="7" y="1.500" width="15" height="19" fill="#f6f6f6" stroke="#777" strokeWidth="1.300" /><path d="M9.500 6h10" stroke="#666" strokeWidth="2" /><path d="M7 10.500h15M9.500 15h7" stroke="#777" strokeWidth="1.500" /><path d="M21 16.500h9l-4.500 4.500z" fill="#444" /></svg>
          </div>
          <div className={`${BTN} ${TAH} mt-[9px] h-[27px] w-[415px] shrink-0`}>Обновить данные таблицы</div>
          <div className={`${BTN} ${TAH} mt-[7px] h-[27px] w-[415px] shrink-0`}>Атрибуты...</div>
        </div>
        <div className="flex h-[30px] shrink-0 items-center gap-[9px] pt-[7px] pl-[2px]">
          <svg width="14" height="10" viewBox="0 0 14 10"><path d="M1 1h12L7 9z" fill="#3a3a3a" stroke="#222" /></svg>
          <span className={BOLD}>Фильтровать объекты</span>
        </div>
        <div className={`${TAH} flex h-[200px] w-[444px] shrink-0 flex-col rounded-[3px] border border-[#d2d2d2] bg-[#ececec] pt-[11px] pl-[13px]`}>
          <div className="flex h-[26px] items-center">
            <span className="w-[104px] pt-[2px]">Максимум строк</span>
            <div className="flex h-[26px] w-[311px] items-center rounded-[3px] border border-[#a9a9a9] bg-white pl-[5px]">
              <span className="grow pt-[2px]">30</span>
              <div className="flex h-full w-[18px] flex-col items-center justify-center gap-[1px] border-l border-[#a9a9a9] bg-[#f6f6f6]"><Tri dir="u" /><Tri dir="d" /></div>
            </div>
          </div>
          <div className="mt-[11px] flex h-[18px] items-center gap-[6px]"><Check /><span className="pt-[2px]">Удалить дублирующиеся строки из таблицы</span></div>
          <div className="mt-[13px] flex h-[18px] items-center gap-[6px]"><Check /><span className="pt-[2px]">Только объекты, видимые на карте</span></div>
          <div className="mt-[12px] flex h-[30px] items-center">
            <span className="w-[104px] text-[#808080]">Связанная карта</span>
            <div className="flex h-[30px] w-[311px] items-center justify-end rounded-[3px] border border-[#b9b9b9] bg-gradient-to-b from-[#f4f4f4] to-[#ebebeb] pr-[9px]"><Tri dir="d" c="#b5b5b5" /></div>
          </div>
        </div>
      </div>
      <VScroll cls="border-l border-[#b9b9b9] bg-[#e5e5e5]">
        <div className="flex h-[17px] items-center justify-center bg-[#fafafa]"><Tri dir="u" /></div>
        <div className="h-[60px] border-y border-[#b4b4b4] bg-gradient-to-r from-white to-[#f0f0f0]" />
        <div className="grow" />
        <div className="flex h-[18px] items-center justify-center border-t border-[#b4b4b4] bg-[#fafafa]"><Tri dir="d" /></div>
      </VScroll>
    </div>
  </div>
);

/* ---------- workspace ---------- */

const Workspace = () => (
  <div className="flex w-[1384px] shrink-0 flex-col bg-[#efefef]">
    <HRuler />
    <div className="flex">
      <VRuler />
      <div className="flex flex-col">
        <div className="flex">
          <div className="relative h-[851px] w-[1334px] shrink-0 overflow-hidden bg-[#d7d7d7]">
            <div className="absolute top-[56px] left-[62px] h-[789px] w-[1115px] bg-[#959595]" />
            <div className="absolute top-[48px] left-[55px] h-[789px] w-[1115px] bg-white">
              <div className="absolute top-[16px] left-[22px]"><TheMap /></div>
              <svg width="2" height="787" viewBox="0 0 2 787" className="absolute top-0 left-[159px]"><path d="M.5 0V787" stroke="#f00" strokeWidth="1" strokeDasharray="1 2" /></svg>
            </div>
          </div>
          <VScroll cls="h-[851px] bg-[#e5e5e5]">
            <div className="flex h-[16px] items-center justify-center border-b border-[#b4b4b4] bg-[#f8f8f8]"><Tri dir="u" /></div>
            <div className="h-[8px] border-b border-[#b4b4b4]" />
            <div className="h-[771px] border-b border-[#b4b4b4] bg-gradient-to-r from-white to-[#f0f0f0]" />
            <div className="grow" />
            <div className="flex h-[18px] items-center justify-center border-t border-[#b4b4b4] bg-[#fafafa]"><Tri dir="d" /></div>
          </VScroll>
        </div>
        <div className="flex h-[17px] w-[1351px] bg-[#e5e5e5]">
          <div className="flex w-[17px] items-center justify-center border-r-2 border-[#c0c0c0] bg-[#fafafa]"><Tri dir="l" /></div>
          <div className="w-[1098px] border-r border-[#b4b4b4] bg-gradient-to-b from-white to-[#f3f3f3]" />
          <div className="grow" />
          <div className="flex w-[18px] items-center justify-center border-l-2 border-[#c0c0c0] bg-[#fafafa]"><Tri dir="r" /></div>
          <div className="w-[17px] bg-[#efefef]" />
        </div>
        <div className="h-px w-[1351px] bg-[#b4b4b4]" />
      </div>
      <div className="mt-[415px] ml-[4px]"><Splitter v /></div>
    </div>
  </div>
);

/* ---------- dialog ---------- */

const ROWS = ['Name', 'номер', 'водоотдача', 'неисправности', 'description'];
const BB = 'flex h-[31px] w-[35px] items-center justify-center rounded-[3px] border border-[#a9a9a9] bg-gradient-to-b from-white to-[#ededed]';

const ListButtons = ({ children }: Kids) => (
  <div className="mt-[7px] ml-[-1px] flex h-[31px] items-center">
    <div className={BB}><svg width="18" height="16" viewBox="0 0 18 16"><path d="M9 1l8 14H1z" fill="#6d97c4" stroke="#3f5f86" strokeWidth="1.200" /></svg></div>
    <div className={`${BB} ml-[7px]`}><svg width="18" height="16" viewBox="0 0 18 16"><path d="M9 15L1 1h16z" fill="#6d97c4" stroke="#3f5f86" strokeWidth="1.200" /></svg></div>
    <div className={`${BB} ml-[8px]`}><svg width="18" height="18" viewBox="0 0 18 18"><path d="M6 1h6v5h5v6h-5v5H6v-5H1V6h5z" fill="#e7f2e5" stroke="#588c50" strokeWidth="1.300" /><path d="M9 3.500v11M3.500 9h11" stroke="#588c50" strokeWidth="2" /></svg></div>
    <div className={`${BB} ml-[7px]`}><svg width="18" height="9" viewBox="0 0 18 9"><rect x=".7" y=".7" width="16.600" height="7.600" fill="#fbdcdc" stroke="#f0696b" strokeWidth="1.300" /><rect x="3.500" y="3" width="11" height="3" fill="#e9383b" /></svg></div>
    {children}
  </div>
);

const Head = 'flex items-center justify-center border-r border-b border-[#b8b8b8] bg-gradient-to-b from-[#fcfcfc] to-[#e9e9e9] pt-[3px]';
const Num = 'flex items-center justify-center border-r border-b border-[#a9a9a9] bg-gradient-to-b from-[#fcfcfc] to-[#ebebeb] pt-[3px]';
const Cell = 'flex items-center border-r border-b border-[#c0c0c0] pt-[2px] pl-[4px]';
const GRID = 'grid grid-cols-[14px_148px_149px_147px_148px]';

const Dialog = () => (
  <div className="absolute top-[61px] left-[627px] flex h-[950px] w-[668px] flex-col border border-[#5f5f5f] bg-[#f0f0f0] shadow-[0_5px_20px_rgba(0,0,0,0.4)]">
    <div className="flex h-[37px] shrink-0 items-center bg-white pr-[14px] pl-[9px]">
      <Logo />
      <span className={`${SEG} ml-[5px] grow pt-px`}>Выберите атрибуты</span>
      <svg width="14" height="14" viewBox="0 0 14 14"><path d="M1 1l12 12M13 1L1 13" stroke="#111" strokeWidth="1.100" /></svg>
    </div>
    <div className={`${BOLD} flex h-[37px] shrink-0 items-end pb-[5px] pl-[16px]`}>Поля</div>
    <div className="ml-[15px] flex h-[399px] w-[638px] shrink-0 flex-col rounded-[3px] border border-[#d4d4d4] bg-[#ececec] pt-[11px] pl-[14px]">
      <div className="flex h-[335px] w-[606px] shrink-0 flex-col">
        <div className={`${GRID} ${BOLD} h-[25px] shrink-0`}>
          <div className="border-b border-[#b8b8b8] bg-gradient-to-b from-[#fcfcfc] to-[#e9e9e9]" />
          <div className={Head}>Атрибут</div><div className={Head}>Заголовок</div><div className={Head}>Выравнивание</div><div className={Head}>Толщина</div>
        </div>
        {ROWS.map((r, i) => (
          <div key={r} className={`${GRID} ${SEG} h-[37.500px] shrink-0 bg-white`}>
            <div className={`${TAH} ${Num}`}>{i}</div>
            <div className={Cell}>{r}</div><div className={Cell}>{r}</div><div className={Cell}>По середине слева</div><div className={Cell}>Автоматически</div>
          </div>
        ))}
        <div className={`${GRID} ${SEG} h-[37px] shrink-0 bg-[#0078d7] text-[#d4ebff]`}>
          <div className={`${BOLD} ${Num} text-black`}>5</div>
          <div className="flex border-r border-b border-[#c0c0c0]">
            <div className="flex w-[110px] items-center justify-end border-2 border-[#43a5f5] bg-white">
              <div className="flex h-full w-[24px] items-center justify-center bg-[#f7f7f7]"><Tri dir="d" /></div>
            </div>
            <div className="ml-[7px] flex grow items-center justify-center rounded-[2px] border border-[#8a8a8a] bg-gradient-to-b from-white to-[#ededed]">
              <svg width="12" height="16" viewBox="0 0 12 16"><path d="M10.500 3.500Q9 1 6 1.300 2.500 1.500 2.700 4.500 3 7.300 7 7.500 1.200 7.500 1.300 11 1.500 14.800 6 14.700 9.500 14.500 10.800 11.500" fill="none" stroke="#5e3a78" strokeWidth="1.900" /></svg>
            </div>
          </div>
          <div className={Cell} /><div className={Cell}>По середине слева</div><div className={Cell}>Автоматически</div>
        </div>
        <div className="ml-[14px] grow border-r border-[#c0c0c0] bg-white" />
      </div>
      <ListButtons>
        <div className={`${BTN} ${TAH} ml-[8px] h-[27px] w-[100px]`}>Восстановить</div>
        <div className={`${BTN} ${TAH} ml-[7px] h-[27px] w-[100px]`}>Очистить</div>
      </ListButtons>
    </div>
    <div className="flex h-[5px] shrink-0 items-center justify-center"><Splitter /></div>
    <div className={`${BOLD} flex h-[23px] shrink-0 items-end pb-[5px] pl-[16px]`}>Сортировка</div>
    <div className="ml-[15px] flex h-[400px] w-[638px] shrink-0 flex-col rounded-[3px] border border-[#d4d4d4] bg-[#ececec] pt-[10px] pl-[14px]">
      <div className={`${TAH} ml-[-1px] flex h-[336px] w-[608px] shrink-0 flex-col border border-[#b8b8b8] bg-white`}>
        <div className="grid h-[24px] shrink-0 grid-cols-[303px_303px]">
          <div className={Head}>Атрибут</div>
          <div className="flex items-center justify-center border-b border-[#b8b8b8] bg-gradient-to-b from-[#fcfcfc] to-[#e9e9e9] pt-[3px]">Порядок сортировки</div>
        </div>
      </div>
      <ListButtons />
    </div>
    <div className={`${TAH} mt-[7px] flex justify-end gap-[8px] pr-[13px]`}>
      <div className="flex h-[27px] w-[100px] items-center justify-center rounded-[3px] border border-[#44a6f5] bg-gradient-to-b from-white to-[#e1e8ee] pt-[2px]">ОК</div>
      <div className={`${BTN} h-[27px] w-[100px]`}>Отмена</div>
      <div className={`${BTN} h-[27px] w-[100px]`}>Справка</div>
    </div>
  </div>
);

const Annotations = () => (
  <svg width="160" height="130" viewBox="700 370 160 130" className="absolute top-[370px] left-[700px]">
    <path d="M755 401.500L840 451 774 490.500M837 452l5-2.500" fill="none" stroke="#f00" strokeWidth="1.500" />
    <path d="M751 398.500l7 1-3.500 5.500zM771 492.500l3.500-6 3.500 5z" fill="#f00" />
    <path d="M779 387v16l3.500-3.500 3.500 8h3l-3.500-8.500h4.500z" fill="#000" stroke="#fff" strokeWidth=".6" />
  </svg>
);

export default function App() {
  return (
    <div className="relative flex h-[1079px] w-[1918px] flex-col overflow-hidden bg-[#efefef] text-black">
      <header className="flex h-[29px] shrink-0 items-center bg-white pl-[2px]">
        <Logo />
        <span className={`${SEG} ml-[5px] grow pt-px text-[#8c8c8c]`}>Планшет</span>
        <svg width="154" height="14" viewBox="0 0 154 14" className="mr-px shrink-0"><g fill="none" stroke="#888"><path d="M2 6.500h12M60.500 3.500h9v9h-9zM63.500 3V1.500h8v9H70M119 1l12 12M131 1l-12 12" /></g></svg>
      </header>
      <nav className={`${SEG} flex h-[26px] shrink-0 items-center border-b-2 border-[#d6d6d6] pt-[2px] pl-[12.500px]`}>
        <span className="w-[60px]">Макет</span><span className="w-[69px]">Правка</span><span className="w-[43px]">Вид</span><span className="w-[87px]">Элементы</span><span className="w-[143.500px]">Добавить элемент</span><span className="w-[57px]">Атлас</span><span>Настройки</span>
      </nav>
      <div className="flex h-[48px] shrink-0 items-center border-b border-[#b4b4b4] bg-gradient-to-b from-[#fbfbfb] to-[#eeeeee]">
        <div className="flex w-[21px] justify-center pr-[7px]"><Grip /></div>
        <Svg><Floppy /></Svg>
        <div className="flex w-[21px] justify-center"><Sep /></div>
        <div className="flex gap-[11.400px]">{R1a}</div>
        <div className="flex w-[21px] justify-center"><Sep /></div>
        <Svg><Page /><Star /></Svg>
        <div className="flex w-[18px] justify-center"><Sep /></div>
        <div className="flex gap-[11.400px]">{R1b}</div>
        <div className="ml-[16px] flex items-center gap-[10px]">
          <Grip />
          <svg width="30" height="24" viewBox="0 0 30 24"><rect x=".5" y=".5" width="29" height="23" rx="3" fill="#e3e3e3" stroke="#c8c8c8" /><path d="M3 5l6-2 3 3-3 4-3-1zM14 4l7-1 5 3-4 4-6-2zM8 13l4 2-2 6-3-4zM17 12l5 2-2 6-3-3z" fill="#c9c9c9" /></svg>
        </div>
        <div className="mt-[4px] ml-[90px] h-[3px] w-[80px] self-start rounded-t-[2px] bg-[#8a8a8a]" />
      </div>
      <div className="flex h-[48px] shrink-0 items-center border-b border-[#b4b4b4] bg-gradient-to-b from-[#fbfbfb] to-[#eeeeee] pt-px">
        <div className="flex w-[21.500px] justify-center pr-[7px]"><Grip /></div>
        <div className="flex gap-[11.300px]">{R2a}</div>
        <div className="flex w-[34px] justify-center pl-[1px]"><Grip /></div>
        <div className="ml-[-1px] flex gap-[11.200px]">{R2b}</div>
      </div>
      <main className="flex h-[895px] shrink-0">
        <aside className="flex w-[49px] shrink-0 flex-col items-center border-r border-[#b4b4b4] bg-gradient-to-r from-[#fafafa] to-[#eeeeee] pl-[2px]">
          <div className="flex h-[17px] shrink-0 flex-col justify-center gap-[2px] pt-[5px]"><Splitter /><Splitter /></div>
          {LEFT.map((g, i) => (
            <div key={i} className="flex h-[40.100px] w-full shrink-0 items-center justify-center">
              <div className={i === 2 ? 'flex h-[39px] w-[40px] items-center justify-center rounded-[3px] border border-[#b0b0b0] bg-[#dadada]' : 'flex'}>
                <Svg>{g}</Svg>
              </div>
            </div>
          ))}
        </aside>
        <Workspace />
        <RightPanel />
      </main>
      <footer className="flex h-[33px] shrink-0 items-center overflow-hidden border-b border-[#444] pb-px">
        <span className={`${SEG} w-[1195px] shrink-0 pt-[7px] pl-[8px]`}>1 item(s) selected</span>
        <div className={`${TAH} flex shrink-0 items-center pl-[8px]`}>
          <span className="w-[132px] pt-[7px]">x: 338.671 мм</span>
          <span className="w-[132.500px] pt-[7px]">y: 151.853 мм</span>
          <span className="w-[132.500px] pt-[7px]">страница: 1</span>
          <div className="mt-[3px] flex h-[27px] w-[185px] items-center rounded-[3px] border border-[#a9a9a9] bg-white pl-[4px]">
            <span className="grow pt-[3px]">67.2%</span>
            <div className="flex h-full w-[25px] items-center justify-center border-l border-[#a9a9a9] bg-[#f7f7f7]"><Tri dir="d" /></div>
          </div>
          <div className="mt-[2px] ml-[10px] flex items-center">
            <div className="h-[7px] w-[7px] rounded-l-[3px] border border-[#1167b0] bg-[#2a8ce0]" />
            <div className="h-[17px] w-[16px] rounded-[3px] border border-[#a0a0a0] bg-gradient-to-b from-white to-[#f0f0f0]" />
            <div className="h-[6px] w-[110px] border-y border-[#b0b0b0] bg-[#cfcfcf]" />
          </div>
        </div>
      </footer>
      <Dialog />
      <Annotations />
    </div>
  );
}
